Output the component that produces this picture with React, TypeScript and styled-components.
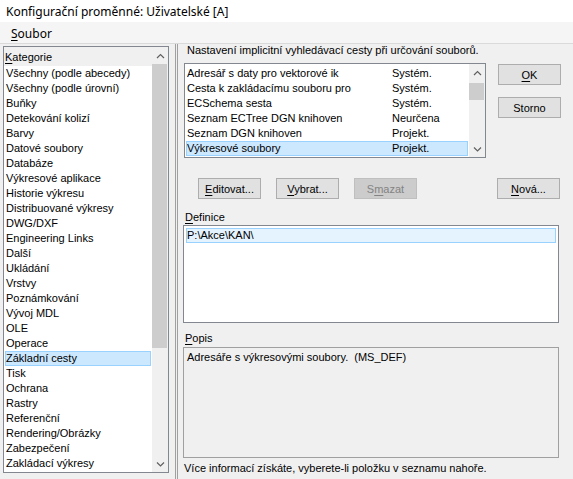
import styled, { createGlobalStyle } from 'styled-components'

const GlobalStyle = createGlobalStyle`
  html, body {
    margin: 0;
    padding: 0;
    background: #f0f0f0;
  }
  body {
    font-family: 'Liberation Sans', Arial, sans-serif;
    font-size: 11px;
    color: #000;
  }
  * {
    box-sizing: border-box;
  }
`

const categories = [
  'Všechny (podle abecedy)',
  'Všechny (podle úrovní)',
  'Buňky',
  'Detekování kolizí',
  'Barvy',
  'Datové soubory',
  'Databáze',
  'Výkresové aplikace',
  'Historie výkresu',
  'Distribuované výkresy',
  'DWG/DXF',
  'Engineering Links',
  'Další',
  'Ukládání',
  'Vrstvy',
  'Poznámkování',
  'Vývoj MDL',
  'OLE',
  'Operace',
  'Základní cesty',
  'Tisk',
  'Ochrana',
  'Rastry',
  'Referenční',
  'Rendering/Obrázky',
  'Zabezpečení',
  'Zakládací výkresy',
]

const paths = [
  { name: 'Adresář s daty pro vektorové ik', level: 'Systém.' },
  { name: 'Cesta k zakládacímu souboru pro', level: 'Systém.' },
  { name: 'ECSchema sesta', level: 'Systém.' },
  { name: 'Seznam ECTree DGN knihoven', level: 'Neurčena' },
  { name: 'Seznam DGN knihoven', level: 'Projekt.' },
  { name: 'Výkresové soubory', level: 'Projekt.' },
]

const Window = styled.div`
  width: 573px;
  height: 479px;
  display: flex;
  flex-direction: column;
  background: #f0f0f0;
  overflow: hidden;
`

const TitleBar = styled.div`
  height: 22px;
  flex: none;
  background: #fff;
  display: flex;
  align-items: center;
  padding-left: 6px;
  font-family: 'Noto Sans', 'Open Sans', sans-serif;
  font-size: 12px;
  color: #000;
`

const MenuBar = styled.div`
  height: 22px;
  flex: none;
  display: flex;
  align-items: center;
  padding: 2px 0 0 11px;
  border-bottom: 1px solid #dadada;
  font-family: 'Noto Sans', 'Open Sans', sans-serif;
  font-size: 12px;
  background: #f5f5f5;
`

const Key = styled.span`
  text-decoration: underline;
  text-underline-offset: 2px;
`

const Body = styled.div`
  flex: 1;
  display: flex;
  min-height: 0;
`

const LeftPane = styled.div`
  width: 176px;
  flex: none;
  padding: 2px 0 6px 3px;
  border-right: 1px solid #a0a0a0;
  display: flex;
`

const ListBox = styled.div<{ width: number }>`
  width: ${({ width }) => width}px;
  height: 100%;
  border: 1px solid #828790;
  background: #fff;
  display: flex;
`

const ListContent = styled.div`
  flex: 1;
  min-width: 0;
  padding: 0 1px;
  display: flex;
  flex-direction: column;
`

const ListHeader = styled.div`
  height: 19px;
  flex: none;
  background: #f0f0f0;
  display: flex;
  align-items: center;
  padding: 1px 0 0 1px;
  margin: 0 -1px;
`

const Row = styled.div<{ selected?: boolean; soft?: boolean }>`
  height: 15px;
  line-height: 13px;
  padding-left: 0;
  display: flex;
  white-space: nowrap;
  border: 1px solid transparent;
  ${({ selected, soft }) =>
    selected
      ? `
    background: ${soft ? '#e5f3ff' : '#cce8ff'};
    border-color: #99d1ff;
  `
      : ''}
`

const NameCell = styled.span`
  width: 205px;
  flex: none;
  overflow: hidden;
`

const Scrollbar = styled.div`
  width: 16px;
  flex: none;
  background: #f0f0f0;
  display: flex;
  flex-direction: column;
`

const ArrowBox = styled.div`
  height: 17px;
  flex: none;
  display: flex;
  align-items: center;
  justify-content: center;
`

const Track = styled.div`
  flex: 1;
  display: flex;
  flex-direction: column;
`

const Thumb = styled.div<{ offset: number; size: number }>`
  margin: ${({ offset }) => offset}px 1px 0 0;
  height: ${({ size }) => size}px;
  background: #cdcdcd;
`

const RightPane = styled.div`
  flex: 1;
  margin-left: 1px;
  border-left: 1px solid #a0a0a0;
  padding-left: 5px;
  display: flex;
  flex-direction: column;
`

const Label = styled.div<{ top: number; indent: number }>`
  margin-top: ${({ top }) => top}px;
  padding-left: ${({ indent }) => indent}px;
  height: 13px;
  line-height: 13px;
  white-space: nowrap;
`

const TopRow = styled.div`
  margin-top: 6px;
  padding-left: 1px;
  display: flex;
  align-items: flex-start;
`

const PathList = styled(ListBox)`
  height: 95px;
`

const PathContent = styled(ListContent)`
  padding-top: 2px;
`

const SideButtons = styled.div`
  margin-left: 12px;
  margin-top: 1px;
  display: flex;
  flex-direction: column;
  gap: 12px;
`

const Button = styled.div<{ disabled?: boolean }>`
  width: 63px;
  height: 21px;
  display: flex;
  align-items: center;
  justify-content: center;
  background: ${({ disabled }) => (disabled ? '#cccccc' : '#e1e1e1')};
  border: 1px solid ${({ disabled }) => (disabled ? '#bfbfbf' : '#adadad')};
  color: ${({ disabled }) => (disabled ? '#838383' : '#000')};
`

const ButtonRow = styled.div`
  margin-top: 20px;
  padding-left: 15px;
  display: flex;
  gap: 15px;
`

const Spacer = styled.div`
  flex: 1;
`

const EndButton = styled(Button)`
  margin-right: 13px;
`

const DefinitionBox = styled.div`
  margin-top: 1px;
  width: 376px;
  height: 98px;
  border: 1px solid #828790;
  background: #fff;
  padding: 2px 2px;
`

const DescriptionBox = styled.div`
  margin-top: 2px;
  width: 376px;
  height: 111px;
  border: 1px solid #a0a0a0;
  background: #f0f0f0;
  padding: 3px 3px;
  line-height: 13px;
  white-space: pre;
`

const Chevron = ({ down }: { down?: boolean }) => (
  <svg width="9" height="6" viewBox="0 0 9 6">
    <polyline
      points={down ? '1,1.5 4.5,5 8,1.5' : '1,5 4.5,1.5 8,5'}
      fill="none"
      stroke="#606060"
      strokeWidth="1.2"
    />
  </svg>
)

const VScroll = ({ offset, size }: { offset: number; size: number }) => (
  <Scrollbar>
    <ArrowBox>
      <Chevron />
    </ArrowBox>
    <Track>
      <Thumb offset={offset} size={size} />
    </Track>
    <ArrowBox>
      <Chevron down />
    </ArrowBox>
  </Scrollbar>
)

export default function App() {
  return (
    <>
      <GlobalStyle />
      <Window>
        <TitleBar>Konfigurační proměnné: Uživatelské [A]</TitleBar>
        <MenuBar>
          <span>
            <Key>S</Key>oubor
          </span>
        </MenuBar>
        <Body>
          <LeftPane>
            <ListBox width={166}>
              <ListContent>
                <ListHeader>
                  <span>
                    <Key>K</Key>ategorie
                  </span>
                </ListHeader>
                {categories.map((c) => (
                  <Row key={c} selected={c === 'Základní cesty'}>
                    {c}
                  </Row>
                ))}
              </ListContent>
              <VScroll offset={0} size={284} />
            </ListBox>
          </LeftPane>
          <RightPane>
            <Label top={0} indent={4}>
              Nastavení implicitní vyhledávací cesty při určování souborů.
            </Label>
            <TopRow>
              <PathList width={302}>
                <PathContent>
                  {paths.map((p) => (
                    <Row key={p.name} selected={p.name === 'Výkresové soubory'}>
                      <NameCell>{p.name}</NameCell>
                      <span>{p.level}</span>
                    </Row>
                  ))}
                </PathContent>
                <VScroll offset={2} size={17} />
              </PathList>
              <SideButtons>
                <Button>
                  <span>
                    <Key>O</Key>K
                  </span>
                </Button>
                <Button>Storno</Button>
              </SideButtons>
            </TopRow>
            <ButtonRow>
              <Button>
                <span>
                  <Key>E</Key>ditovat...
                </span>
              </Button>
              <Button>
                <span>
                  <Key>V</Key>ybrat...
                </span>
              </Button>
              <Button disabled>
                <span>
                  S<Key>m</Key>azat
                </span>
              </Button>
              <Spacer />
              <EndButton>
                <span>
                  <Key>N</Key>ová...
                </span>
              </EndButton>
            </ButtonRow>
            <Label top={12} indent={2}>
              <Key>D</Key>efinice
            </Label>
            <DefinitionBox>
              <Row selected soft>
                P:\Akce\KAN\
              </Row>
            </DefinitionBox>
            <Label top={9} indent={2}>
              <Key>P</Key>opis
            </Label>
            <DescriptionBox>Adresáře s výkresovými soubory.  (MS_DEF)</DescriptionBox>
            <Label top={4} indent={1}>
              Více informací získáte, vyberete-li položku v seznamu nahoře.
            </Label>
          </RightPane>
        </Body>
      </Window>
    </>
  )
}
